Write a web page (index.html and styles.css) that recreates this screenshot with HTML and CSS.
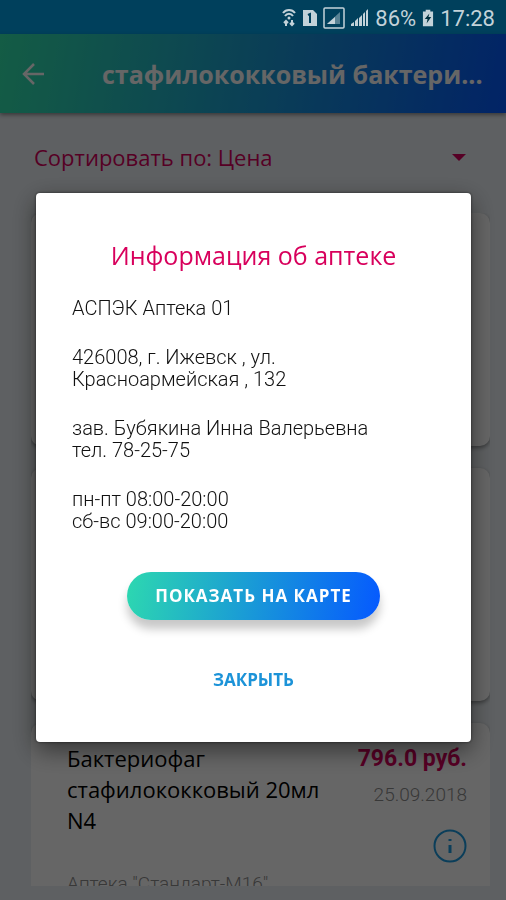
FILE: index.html
```
<!DOCTYPE html>
<html lang="ru">
<head>
    <meta charset="UTF-8">
    <meta name="viewport" content="width=device-width, initial-scale=1.0">
    <title>Информация об аптеке</title>
    <link rel="stylesheet" href="styles.css">
</head>
<body>
    <div class="statusbar">
        <svg width="14" height="20" viewBox="0 0 14 20" fill="none" stroke="currentColor" stroke-width="2">
            <path d="M1 5c3-4 9-4 12 0M3 8c2-3 6-3 8 0"/>
            <circle cx="7" cy="10" r="1.5" fill="currentColor" stroke="none"/>
            <path d="M4 18v-5M2 15l2-2 2 2M10 12v5M8 15l2 2 2-2"/>
        </svg>
        <svg width="15" height="18" viewBox="0 0 15 18">
            <path d="M1 1h10l4 4v12H1z" fill="currentColor"/>
            <path d="M6 6l2-1v9" fill="none" stroke="#00405c" stroke-width="2"/>
        </svg>
        <svg width="22" height="22" viewBox="0 0 22 22">
            <rect x="1" y="1" width="20" height="20" rx="1" fill="none" stroke="currentColor" stroke-width="1.5"/>
            <path d="M4 17L17 5v12z" fill="currentColor" opacity=".45"/>
            <path d="M4 17l8-7v7z" fill="currentColor"/>
        </svg>
        <svg width="18" height="18" viewBox="0 0 18 18" fill="currentColor">
            <path d="M0 17v-2l3-2v4zM4 17v-5l3-3v8zM8 17V9l3-3v11zM12 17V5l2-2v14zM15 17V2l2-2v17z"/>
        </svg>
        <span class="battery">86%</span>
        <svg width="12" height="18" viewBox="0 0 13 18">
            <path d="M4 0h5v2h3v16H1V2h3z" fill="currentColor"/>
            <path d="M8 4l-5 6h3l-1 5 5-7H7z" fill="#00303f"/>
        </svg>
        <span class="clock">17:28</span>
    </div>

    <header class="header">
        <button class="back" type="button" aria-label="Назад">
            <svg width="24" height="24" viewBox="0 0 24 24" fill="none" stroke="currentColor" stroke-width="2.5">
                <path d="M22 12H3M12 2L2 12l10 10"/>
            </svg>
        </button>
        <h1 class="header-title">стафилококковый бактери...</h1>
    </header>

    <main class="content">
        <div class="sort">
            <select class="sort-select" aria-label="Сортировка">
                <option>Сортировать по: Цена</option>
            </select>
        </div>
        <div class="cards">
            <article class="card"></article>
            <article class="card"></article>
            <article class="card">
                <div class="card-main">
                    <h2 class="card-name">Бактериофаг стафилококковый 20мл N4</h2>
                    <div class="card-side">
                        <span class="price">796.0 руб.</span>
                        <span class="date">25.09.2018</span>
                        <button class="info" type="button" aria-label="Информация">
                            <svg width="34" height="34" viewBox="0 0 34 34" fill="none" stroke="currentColor">
                                <circle cx="17" cy="17" r="15.5" stroke-width="2"/>
                                <path d="M17 16v8M17 10v2" stroke-width="3"/>
                            </svg>
                        </button>
                    </div>
                </div>
                <p class="pharmacy">Аптека "Стандарт-М16"</p>
            </article>
        </div>
    </main>

    <div class="overlay">
        <section class="dialog" role="dialog" aria-labelledby="dialogTitle">
            <h2 class="dialog-title" id="dialogTitle">Информация об аптеке</h2>
            <div class="dialog-text">
                <p>АСПЭК Аптека 01</p>
                <p>426008, г. Ижевск , ул. Красноармейская , 132</p>
                <p>зав. Бубякина Инна Валерьевна<br>тел. 78-25-75</p>
                <p>пн-пт 08:00-20:00<br>сб-вс 09:00-20:00</p>
            </div>
            <button class="map-button" type="button">ПОКАЗАТЬ НА КАРТЕ</button>
            <button class="close-button" type="button">ЗАКРЫТЬ</button>
        </section>
    </div>
</body>
</html>
```

FILE: styles.css
```
* {
    box-sizing: border-box;
}
body {
    margin: 0;
    height: 100vh;
    display: flex;
    flex-direction: column;
    overflow: hidden;
    background-color: #ebf0f4;
    font-family: "Open Sans", "Noto Sans", sans-serif;
}
h1, h2, p {
    margin: 0;
}
button {
    border: none;
    padding: 0;
    background: none;
    font-family: inherit;
}
svg {
    display: block;
    flex-shrink: 0;
}

/* статус-бар */
.statusbar {
    height: 34px;
    flex-shrink: 0;
    display: flex;
    align-items: center;
    justify-content: flex-end;
    gap: 6px;
    padding: 2px 11px 0 0;
    background-color: #00405c;
    color: #c3d2d9;
    font-family: Roboto, sans-serif;
    font-size: 22px;
}

/* шапка */
.header {
    height: 79px;
    flex-shrink: 0;
    display: flex;
    align-items: center;
    gap: 56px;
    padding: 0 16px 0 22px;
    background: linear-gradient(100deg, #32e6ac, #0559ff);
    box-shadow: 0 2px 4px rgba(0, 0, 0, 0.4);
    color: #fff;
}
.back {
    color: inherit;
}
.header-title {
    flex: 1;
    min-width: 0;
    white-space: nowrap;
    font-size: 25px;
    line-height: 32px;
}

/* список */
.content {
    flex: 1;
    min-height: 0;
    display: flex;
    flex-direction: column;
    padding: 28px 16px 14px 31px;
}
.sort {
    flex-shrink: 0;
    display: flex;
    align-items: center;
    padding: 0 24px 0 3px;
    margin-bottom: 40px;
    color: #d8005c;
}
.sort::after {
    content: "";
    border: 7px solid transparent;
    border-top-color: #d8005c;
    border-bottom: none;
}
.sort-select {
    flex: 1;
    height: 32px;
    padding: 0;
    appearance: none;
    border: none;
    background: none;
    color: inherit;
    font-family: inherit;
    font-size: 22px;
}
.cards {
    flex: 1;
    min-height: 0;
    display: flex;
    flex-direction: column;
    gap: 22px;
    overflow: hidden;
}
.card {
    flex-shrink: 0;
    min-height: 233px;
    padding: 20px 23px 20px 36px;
    border-radius: 10px;
    background-color: #fff;
    box-shadow: 0 2px 4px rgba(0, 0, 0, 0.4);
}
.card-main {
    display: flex;
    justify-content: space-between;
    gap: 20px;
}
.card-name {
    flex: 1;
    font-size: 22px;
    font-weight: normal;
    line-height: 31px;
}
.card-side {
    display: flex;
    flex-direction: column;
    align-items: flex-end;
    font-family: Roboto, sans-serif;
}
.price {
    color: #d8005c;
    font-size: 23px;
    font-weight: bold;
    line-height: 31px;
}
.date {
    margin-top: 7px;
    color: #8c8c8c;
    font-size: 19px;
    font-weight: 300;
    line-height: 28px;
}
.info {
    margin-top: 20px;
    color: #1c9be0;
}
.pharmacy {
    margin-top: 7px;
    color: #8c8c8c;
    font-family: Roboto, sans-serif;
    font-size: 19px;
    font-weight: 300;
    line-height: 28px;
}

/* окно с информацией */
.overlay {
    position: fixed;
    inset: 34px 0 0;
    display: flex;
    align-items: center;
    padding: 0 35px 0 36px;
    background-color: rgba(0, 0, 0, 0.6);
}
.dialog {
    flex: 1;
    display: flex;
    flex-direction: column;
    align-items: center;
    padding: 44px 36px 50px;
    border-radius: 4px;
    background-color: #fff;
    box-shadow: 0 8px 24px rgba(0, 0, 0, 0.5), 0 0 3px rgba(0, 0, 0, 0.6);
}
.dialog-title {
    color: #d8005c;
    font-size: 25px;
    font-weight: normal;
    line-height: 36px;
}
.dialog-text {
    align-self: stretch;
    display: flex;
    flex-direction: column;
    gap: 27px;
    margin-top: 24px;
    color: #111;
    font-family: Roboto, sans-serif;
    font-size: 20px;
    font-weight: 300;
    line-height: 22px;
}
.map-button {
    margin-top: 40px;
    height: 48px;
    padding: 0 28px;
    border-radius: 24px;
    background: linear-gradient(100deg, #2dd8b0, #0559ff);
    box-shadow: 0 9px 10px rgba(0, 0, 0, 0.22);
    color: #fff;
    font-size: 17px;
    font-weight: bold;
    letter-spacing: 1px;
}
.close-button {
    margin-top: 48px;
    color: #1c93d8;
    font-size: 17px;
    font-weight: bold;
    line-height: 24px;
}
```
